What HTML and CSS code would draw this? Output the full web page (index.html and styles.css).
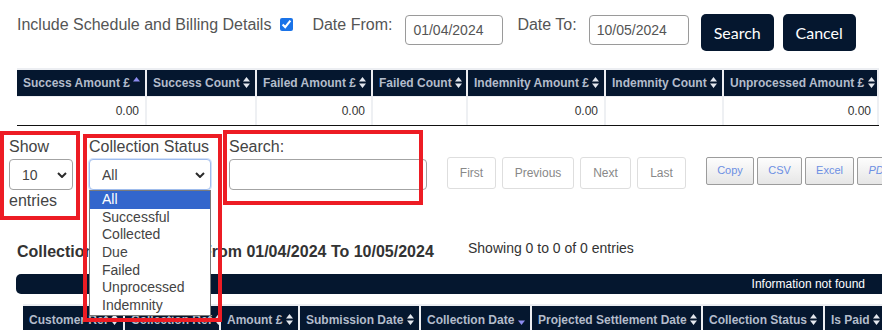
FILE: index.html
```html
<!DOCTYPE html>
<html lang="en">
<head>
<meta charset="utf-8">
<title>Collections</title>
<link rel="stylesheet" href="styles.css">
</head>
<body>
<div class="page">
  <div class="toolbar">
    <span class="lbl">Include Schedule and Billing Details</span>
    <input type="checkbox" class="chk" checked>
    <span class="lbl lbl-from">Date From:</span>
    <input class="date" value="01/04/2024">
    <span class="lbl lbl-to">Date To:</span>
    <input class="date date-to" value="10/05/2024">
    <button class="btn">Search</button>
    <button class="btn btn-cancel">Cancel</button>
  </div>

  <table class="summary">
    <colgroup>
      <col class="c130"><col class="c110"><col class="c116"><col class="c95"><col class="c138"><col class="c118"><col class="c155">
    </colgroup>
    <thead>
      <tr>
        <th>Success Amount £ <svg class="sort" viewBox="0 0 7 11"><path class="asc" d="M0 4.5 3.5 0 7 4.5Z"/></svg></th>
        <th>Success Count <svg class="sort" viewBox="0 0 7 11"><path d="M0 4.5 3.5 0 7 4.5Z M0 6.5 7 6.5 3.5 11Z"/></svg></th>
        <th>Failed Amount £ <svg class="sort" viewBox="0 0 7 11"><path d="M0 4.5 3.5 0 7 4.5Z M0 6.5 7 6.5 3.5 11Z"/></svg></th>
        <th>Failed Count <svg class="sort" viewBox="0 0 7 11"><path d="M0 4.5 3.5 0 7 4.5Z M0 6.5 7 6.5 3.5 11Z"/></svg></th>
        <th>Indemnity Amount £ <svg class="sort" viewBox="0 0 7 11"><path d="M0 4.5 3.5 0 7 4.5Z M0 6.5 7 6.5 3.5 11Z"/></svg></th>
        <th>Indemnity Count <svg class="sort" viewBox="0 0 7 11"><path d="M0 4.5 3.5 0 7 4.5Z M0 6.5 7 6.5 3.5 11Z"/></svg></th>
        <th>Unprocessed Amount £ <svg class="sort" viewBox="0 0 7 11"><path d="M0 4.5 3.5 0 7 4.5Z M0 6.5 7 6.5 3.5 11Z"/></svg></th>
      </tr>
    </thead>
    <tbody>
      <tr>
        <td>0.00</td><td></td><td>0.00</td><td></td><td>0.00</td><td></td><td>0.00</td>
      </tr>
    </tbody>
  </table>

  <div class="filters">
    <div class="fgroup fg-show">
      <label class="flabel">Show</label>
      <div class="sel">
        <select><option>10</option></select>
        <svg class="chev" viewBox="0 0 10 6"><path d="M1 1 5 5 9 1"/></svg>
      </div>
      <div class="flabel">entries</div>
    </div>
    <div class="fgroup fg-status">
      <label class="flabel">Collection Status</label>
      <div class="sel sel-focus">
        <select><option>All</option></select>
        <svg class="chev" viewBox="0 0 10 6"><path d="M1 1 5 5 9 1"/></svg>
      </div>
      <ul class="dropdown">
        <li class="active">All</li>
        <li>Successful</li>
        <li>Collected</li>
        <li>Due</li>
        <li>Failed</li>
        <li>Unprocessed</li>
        <li>Indemnity</li>
      </ul>
    </div>
    <div class="fgroup fg-search">
      <label class="flabel">Search:</label>
      <input class="search-input" type="text">
    </div>
    <div class="pager">
      <button class="pbtn w49">First</button>
      <button class="pbtn w72">Previous</button>
      <button class="pbtn w51">Next</button>
      <button class="pbtn w49">Last</button>
    </div>
    <div class="exports">
      <button class="xbtn w48">Copy</button>
      <button class="xbtn w45">CSV</button>
      <button class="xbtn w49">Excel</button>
      <button class="xbtn w45 pdf">PDF</button>
    </div>
  </div>

  <div class="heading-row">
    <h2 class="title">Collection Transactions From 01/04/2024 To 10/05/2024</h2>
    <div class="showing">Showing 0 to 0 of 0 entries</div>
  </div>

  <div class="info-bar">Information not found</div>

  <table class="grid">
    <colgroup>
      <col class="c102"><col class="c96"><col class="c79"><col class="c121"><col class="c111"><col class="c171"><col class="c122"><col class="c80">
    </colgroup>
    <thead>
      <tr>
        <th>Customer Ref <svg class="sort" viewBox="0 0 7 11"><path d="M0 4.5 3.5 0 7 4.5Z M0 6.5 7 6.5 3.5 11Z"/></svg></th>
        <th>Collection Ref <svg class="sort" viewBox="0 0 7 11"><path d="M0 4.5 3.5 0 7 4.5Z M0 6.5 7 6.5 3.5 11Z"/></svg></th>
        <th>Amount £ <svg class="sort" viewBox="0 0 7 11"><path d="M0 4.5 3.5 0 7 4.5Z M0 6.5 7 6.5 3.5 11Z"/></svg></th>
        <th>Submission Date <svg class="sort" viewBox="0 0 7 11"><path d="M0 4.5 3.5 0 7 4.5Z M0 6.5 7 6.5 3.5 11Z"/></svg></th>
        <th>Collection Date <svg class="sort" viewBox="0 0 7 11"><path class="asc" d="M0 6.5 7 6.5 3.5 11Z"/></svg></th>
        <th>Projected Settlement Date <svg class="sort" viewBox="0 0 7 11"><path d="M0 4.5 3.5 0 7 4.5Z M0 6.5 7 6.5 3.5 11Z"/></svg></th>
        <th>Collection Status <svg class="sort" viewBox="0 0 7 11"><path d="M0 4.5 3.5 0 7 4.5Z M0 6.5 7 6.5 3.5 11Z"/></svg></th>
        <th>Is Paid <svg class="sort" viewBox="0 0 7 11"><path d="M0 4.5 3.5 0 7 4.5Z M0 6.5 7 6.5 3.5 11Z"/></svg></th>
      </tr>
    </thead>
  </table>

  <div class="mark mark-show"></div>
  <div class="mark mark-status"></div>
  <div class="mark mark-search"></div>
</div>
</body>
</html>
```

FILE: styles.css
```css
* { box-sizing: border-box; }
html, body { margin: 0; padding: 0; }
body {
  font-family: "Liberation Sans", Arial, sans-serif;
  color: #333;
  background: #fff;
  width: 882px;
  height: 330px;
  overflow: hidden;
}
.page { position: relative; width: 882px; }

/* top toolbar */
.toolbar {
  display: flex;
  align-items: flex-start;
  padding: 14px 0 0 17px;
  height: 51px;
  white-space: nowrap;
}
.toolbar > * { flex-shrink: 0; }
.lbl { font-size: 16px; line-height: 22px; color: #555; }
.chk { margin: 4px 0 0 9px; width: 13px; height: 13px; accent-color: #1a73e8; }
.lbl-from { margin-left: 19px; }
.lbl-to { margin-left: 14px; }
.date {
  margin: 1px 0 0 13px;
  width: 98px;
  height: 30px;
  border: 1px solid #9a9a9a;
  border-radius: 4px;
  padding: 0 7px;
  font: 14px "Liberation Sans", Arial, sans-serif;
  color: #555;
  background: #fff;
}
.date-to { margin-left: 12px; width: 100px; }
.btn {
  margin-left: 12px;
  width: 73px;
  height: 37px;
  border: 0;
  border-radius: 5px;
  background: #05172f;
  color: #fff;
  font: 16px Lato, "Liberation Sans", sans-serif;
  padding: 0;
}
.btn-cancel { margin-left: 9px; }

/* tables */
.summary, .grid {
  border-collapse: separate;
  border-spacing: 0;
  table-layout: fixed;
}
.summary {
  margin: 17px 0 0 17px;
  width: 862px;
  border-top: 2px solid #eceef2;
  border-bottom: 1px solid #111;
}
.c130 { width: 130px; } .c110 { width: 110px; } .c116 { width: 116px; }
.c95 { width: 95px; } .c138 { width: 138px; } .c118 { width: 118px; } .c155 { width: 155px; }
.c102 { width: 102px; } .c96 { width: 96px; } .c79 { width: 79px; } .c121 { width: 121px; }
.c111 { width: 111px; } .c171 { width: 171px; } .c122 { width: 122px; } .c80 { width: 80px; }

th {
  background: #05172f;
  color: #b3bccb;
  font-weight: bold;
  font-size: 12px;
  height: 27px;
  padding: 0 4px 0 6px;
  text-align: left;
  white-space: nowrap;
  overflow: hidden;
  border-right: 2px solid #eceef2;
}
.summary th { border-bottom: 1px solid #eceef2; }
.summary td {
  height: 28px;
  padding: 0 6px;
  font-size: 12px;
  text-align: right;
  color: #333;
  border-right: 2px solid #eef0f3;
}
.sort { width: 7px; height: 11px; vertical-align: -1px; fill: #e3e7ee; }
.sort .asc { fill: #8d8cf0; }

/* filters row */
.filters {
  position: relative;
  display: flex;
  align-items: flex-start;
  padding: 10px 0 0 9px;
  height: 86px;
  white-space: nowrap;
}
.filters > * { flex-shrink: 0; }
.fgroup { position: relative; }
.flabel { display: block; font-size: 16px; line-height: 22px; color: #444; }
.fg-show { width: 64px; }
.fg-status { width: 122px; margin-left: 16px; z-index: 5; }
.fg-search { width: 198px; margin-left: 18px; }
.sel { position: relative; margin-top: 1px; height: 31px; }
.sel select {
  appearance: none;
  -webkit-appearance: none;
  display: block;
  width: 100%;
  height: 31px;
  border: 1px solid #a3a3a3;
  border-radius: 4px;
  padding: 0 0 0 12px;
  font: 14px "Liberation Sans", Arial, sans-serif;
  color: #444;
  background: #fff;
}
.sel-focus select { border-color: #9fbcec; box-shadow: 0 0 0 1px #d3e2fb; }
.chev {
  position: absolute;
  right: 6px;
  top: 13px;
  width: 10px;
  height: 6px;
  fill: none;
  stroke: #2b2b2b;
  stroke-width: 2;
  pointer-events: none;
}
.dropdown {
  position: absolute;
  left: 0;
  top: 54px;
  width: 122px;
  margin: 0;
  padding: 0;
  list-style: none;
  border: 1px solid #7a7a7a;
  background: #fff;
}
.dropdown li {
  height: 17.7px;
  line-height: 17.7px;
  padding-left: 12px;
  font-size: 14px;
  color: #444;
}
.dropdown li.active { background: #3366cc; color: #fff; }
.search-input {
  display: block;
  margin-top: 1px;
  width: 198px;
  height: 31px;
  border: 1px solid #a3a3a3;
  border-radius: 4px;
  background: #fff;
}
.pager { display: flex; gap: 6px; margin: 21px 0 0 20px; }
.pbtn {
  flex-shrink: 0;
  height: 32px;
  border: 1px solid #dedede;
  border-radius: 3px;
  background: #fff;
  color: #888;
  font: 12px "Liberation Sans", Arial, sans-serif;
  padding: 0;
}
.w45 { width: 45px; } .w48 { width: 48px; } .w49 { width: 49px; }
.w51 { width: 51px; } .w72 { width: 72px; }
.exports { display: flex; gap: 3px; margin: 21px 0 0 20px; }
.xbtn {
  height: 28px;
  border: 1px solid #9c9c9c;
  border-radius: 2px;
  background: linear-gradient(#fdfdfd, #e6e6e6);
  color: #6c8fe3;
  font: 11px "Liberation Sans", Arial, sans-serif;
  padding: 0 0 3px;
  flex-shrink: 0;
}
.pdf { font-style: italic; }

/* heading */
.heading-row {
  display: flex;
  align-items: flex-start;
  margin-top: 25px;
  padding-left: 17px;
  white-space: nowrap;
}
.title {
  flex-shrink: 0;
  width: 451px;
  margin: 0;
  padding-top: 4px;
  font-size: 16px;
  line-height: 22px;
  font-weight: bold;
  color: #333;
}
.showing { font-size: 14px; line-height: 22px; color: #333; }

.info-bar {
  margin: 11px 0 0 16px;
  height: 20px;
  line-height: 20px;
  border-radius: 5px 0 0 5px;
  background: #05172f;
  color: #fff;
  font-size: 12px;
  text-align: right;
  padding-right: 17px;
}
.grid {
  margin: 10px 0 0 23px;
  width: 882px;
  border-top: 2px solid #eceef2;
}

/* annotation boxes */
.mark { position: absolute; border: 4px solid #ed1c24; z-index: 10; pointer-events: none; }
.mark-show { left: 0; top: 131px; width: 80px; height: 89px; }
.mark-status { left: 83px; top: 134px; width: 139px; height: 188px; }
.mark-search { left: 223px; top: 130px; width: 200px; height: 75px; }
```
